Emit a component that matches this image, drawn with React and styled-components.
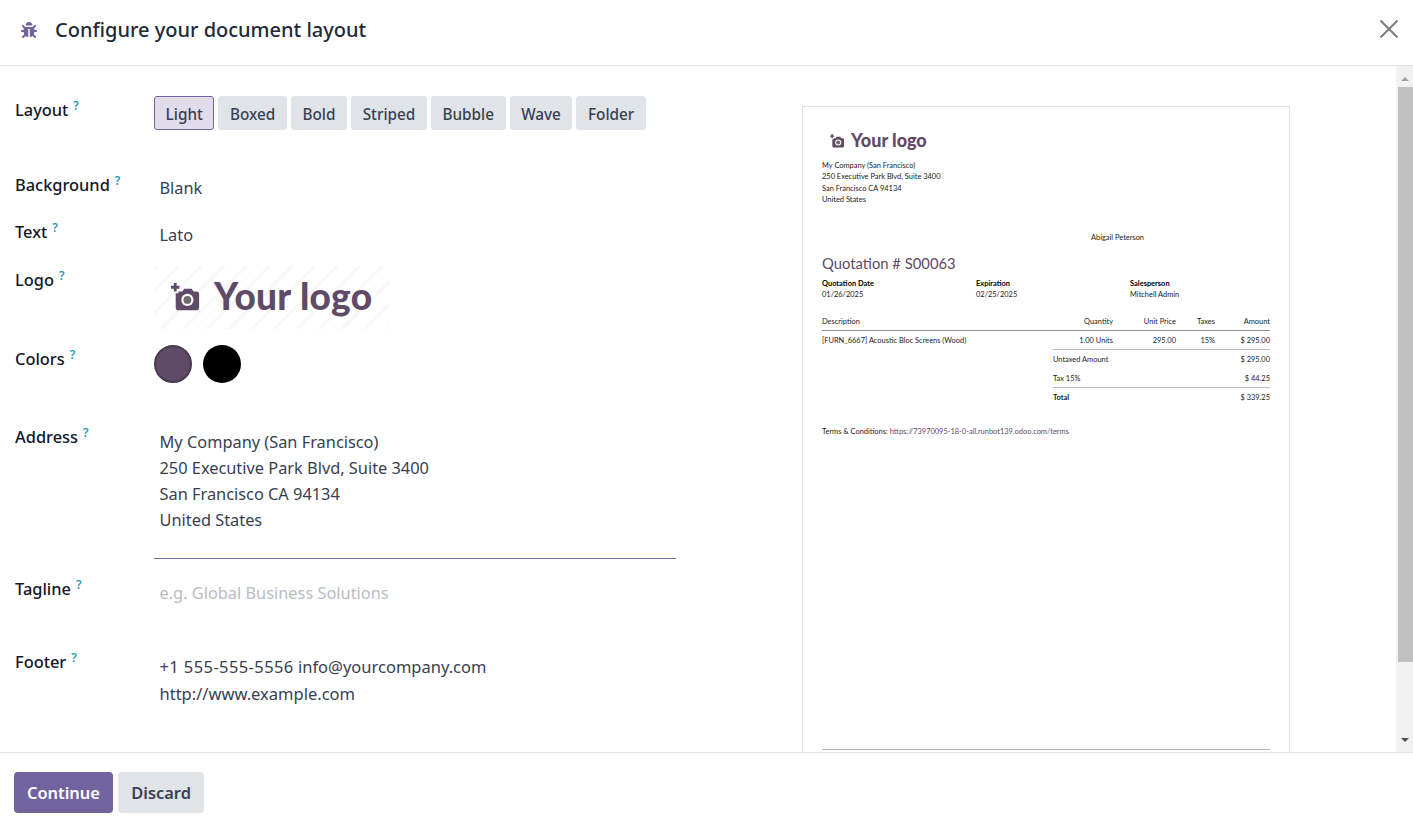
import styled, { createGlobalStyle } from "styled-components";
import { FaBug } from "react-icons/fa";

const layouts = ["Light", "Boxed", "Bold", "Striped", "Bubble", "Wave", "Folder"];
const infoCols = [
  ["Quotation Date", "01/26/2025"],
  ["Expiration", "02/25/2025"],
  ["Salesperson", "Mitchell Admin"],
];

const CameraIcon = ({ size }) => (
  <svg width={size} height={size} viewBox="0 0 32 32">
    <path d="M3 0h3v3h3v3H6v3H3V6H0V3h3z" fill="#5f4a67" />
    <path
      d="M5 11h3V9h4l2-3h8l2 3h3a3 3 0 0 1 3 3v14a3 3 0 0 1-3 3H8a3 3 0 0 1-3-3z"
      fill="#5f4a67"
    />
    <circle cx="17.5" cy="18" r="6.5" fill="#fff" />
    <circle cx="17.5" cy="18" r="4.2" fill="#6b6b6b" />
  </svg>
);

const Help = () => <HelpMark>?</HelpMark>;

export default function App() {
  return (
    <>
      <GlobalStyle />
      <Dialog>
        <Header>
          <BugWrap>
            <FaBug size={16} />
          </BugWrap>
          <Title>Configure your document layout</Title>
          <CloseButton aria-label="Close">
            <svg width="18" height="18" viewBox="0 0 18 18">
              <path d="M.5.5l17 17M17.5.5l-17 17" stroke="#7b7b7b" strokeWidth="2" />
            </svg>
          </CloseButton>
        </Header>

        <Body>
          <Form>
            <Row $height={105} $top={30}>
              <Label>Layout<Help /></Label>
              <ButtonGroup>
                {layouts.map((name, i) => (
                  <LayoutButton key={name} $active={i === 0}>{name}</LayoutButton>
                ))}
              </ButtonGroup>
            </Row>
            <Row $height={47}>
              <Label>Background<Help /></Label>
              <Value>Blank</Value>
            </Row>
            <Row $height={48}>
              <Label>Text<Help /></Label>
              <Value>Lato</Value>
            </Row>
            <Row $height={79}>
              <Label>Logo<Help /></Label>
              <LogoBox>
                <CameraIcon size={30} />
                <LogoText>Your logo</LogoText>
              </LogoBox>
            </Row>
            <Row $height={78}>
              <Label>Colors<Help /></Label>
              <Swatches>
                <Swatch $color="#5f4a67" $ring />
                <Swatch $color="#000" />
              </Swatches>
            </Row>
            <Row $height={152}>
              <Label>Address<Help /></Label>
              <AddressField>
                My Company (San Francisco)<br />
                250 Executive Park Blvd, Suite 3400<br />
                San Francisco CA 94134<br />
                United States
              </AddressField>
            </Row>
            <Row $height={73}>
              <Label>Tagline<Help /></Label>
              <Placeholder>e.g. Global Business Solutions</Placeholder>
            </Row>
            <Row $height={90}>
              <Label>Footer<Help /></Label>
              <FooterValue>
                <Phone>+1 555-555-5556</Phone> info@yourcompany.com<br />
                http://www.example.com
              </FooterValue>
            </Row>
          </Form>

          <PreviewPane>
            <Paper>
              <PaperLogo>
                <CameraIcon size={15} />
                <PaperLogoText>Your logo</PaperLogoText>
              </PaperLogo>
              <PaperAddress>
                My Company (San Francisco)<br />
                250 Executive Park Blvd, Suite 3400<br />
                San Francisco CA 94134<br />
                United States
              </PaperAddress>
              <Customer>Abigail Peterson</Customer>
              <QuoteTitle>Quotation # S00063</QuoteTitle>
              <InfoGrid>
                {infoCols.map(([head, val]) => (
                  <div key={head}>
                    <InfoHead>{head}</InfoHead>
                    <div>{val}</div>
                  </div>
                ))}
              </InfoGrid>
              <LinesHead>
                <span>Description</span>
                <Num>Quantity</Num>
                <Num>Unit Price</Num>
                <Num>Taxes</Num>
                <Num>Amount</Num>
              </LinesHead>
              <LinesRow>
                <span>[FURN_6667] Acoustic Bloc Screens (Wood)</span>
                <Num>1.00 Units</Num>
                <Num>295.00</Num>
                <Num>15%</Num>
                <Num>$ 295.00</Num>
              </LinesRow>
              <Totals>
                <TotalRow $line>
                  <span>Untaxed Amount</span>
                  <span>$ 295.00</span>
                </TotalRow>
                <TotalRow>
                  <span>Tax 15%</span>
                  <span>$ 44.25</span>
                </TotalRow>
                <TotalRow $line>
                  <strong>Total</strong>
                  <span>$ 339.25</span>
                </TotalRow>
              </Totals>
              <Terms>
                Terms &amp; Conditions: <TermsLink>https://73970095-18-0-all.runbot139.odoo.com/terms</TermsLink>
              </Terms>
              <PaperFooterRule />
            </Paper>
          </PreviewPane>

          <Scrollbar>
            <Arrow $up />
            <ScrollTrack>
              <ScrollThumb />
            </ScrollTrack>
            <Arrow />
          </Scrollbar>
        </Body>

        <Footer>
          <PrimaryButton>Continue</PrimaryButton>
          <SecondaryButton>Discard</SecondaryButton>
        </Footer>
      </Dialog>
    </>
  );
}

const GlobalStyle = createGlobalStyle`
  html, body {
    margin: 0;
    padding: 0;
    background: #fff;
    overflow: hidden;
  }
  body {
    font-family: "Noto Sans", "Open Sans", sans-serif;
    color: #374151;
  }
`;

const Dialog = styled.div`
  width: 1413px;
  height: 822px;
  display: flex;
  flex-direction: column;
  overflow: hidden;
`;

const Header = styled.header`
  height: 65px;
  flex: none;
  display: flex;
  align-items: center;
  padding: 0 15px 0 21px;
  border-bottom: 1px solid #e2e2e6;
`;

const BugWrap = styled.span`
  display: flex;
  color: #71639e;
  margin: -5px 18px 0 0;
`;

const Title = styled.h1`
  margin: -6px 0 0;
  flex: 1;
  font-size: 20px;
  font-weight: 500;
  color: #1f2937;
`;

const CloseButton = styled.button`
  border: 0;
  padding: 0;
  margin-top: -7px;
  background: none;
  display: flex;
`;

const Body = styled.main`
  flex: 1;
  min-height: 0;
  display: flex;
  overflow: hidden;
`;

const Form = styled.section`
  width: 787px;
  flex: none;
  padding-left: 15px;
`;

const Row = styled.div`
  height: ${(p) => p.$height}px;
  box-sizing: border-box;
  padding-top: ${(p) => p.$top || 0}px;
  display: flex;
  align-items: flex-start;
`;

const Label = styled.div`
  width: 139px;
  flex: none;
  padding-top: 2px;
  font-size: 16.4px;
  line-height: 24px;
  font-weight: 500;
  color: #111827;
`;

const HelpMark = styled.sup`
  margin-left: 5px;
  font-size: 12px;
  font-weight: 600;
  color: #1f9bbd;
  line-height: 0;
`;

const ButtonGroup = styled.div`
  display: flex;
  gap: 4px;
`;

const LayoutButton = styled.button`
  height: 34px;
  padding: 1px 10.6px 0;
  border: 1px solid ${(p) => (p.$active ? "#71639e" : "#e0e3e8")};
  border-radius: 3px;
  background: ${(p) => (p.$active ? "#e0dce9" : "#e0e3e8")};
  color: #374151;
  font-family: inherit;
  font-size: 15.3px;
  font-weight: 500;
`;

const Value = styled.div`
  padding: 4px 0 0 5.5px;
  font-size: 16.35px;
  line-height: 26px;
  color: #374151;
`;

const LogoBox = styled.div`
  width: 235px;
  height: 63px;
  display: flex;
  align-items: center;
  padding-left: 17px;
  box-sizing: border-box;
  gap: 13px;
  background: repeating-linear-gradient(
    135deg,
    #f8f8f8 0 3px,
    #fff 3px 16px
  );
`;

const LogoText = styled.span`
  margin-top: -4px;
  font-family: "Lato", sans-serif;
  font-size: 37px;
  font-weight: 900;
  letter-spacing: 0.3px;
  color: #5f4a67;
`;

const Swatches = styled.div`
  display: flex;
  gap: 11px;
`;

const Swatch = styled.div`
  width: 38px;
  height: 38px;
  box-sizing: border-box;
  border-radius: 50%;
  background: ${(p) => p.$color};
  border: ${(p) => (p.$ring ? "2px solid #4a3a52" : "0")};
`;

const AddressField = styled(Value)`
  width: 516px;
  height: 129px;
  padding-top: 0;
  margin-top: 6px;
  border-bottom: 1px solid #71639e;
`;

const Placeholder = styled(Value)`
  padding-top: 5px;
  color: #b9bcc2;
`;

const FooterValue = styled(Value)`
  font-size: 16.5px;
  line-height: 27px;
  padding-top: 0;
  margin-top: 5px;
`;

const Phone = styled.span`
  letter-spacing: 0.4px;
`;

const PreviewPane = styled.section`
  flex: 1;
  min-width: 0;
  padding-top: 40px;
`;

const Paper = styled.div`
  width: 488px;
  height: 700px;
  box-sizing: border-box;
  padding: 20px 19px 0;
  border: 1px solid #e2e2e6;
  font-family: "Lato", sans-serif;
  font-size: 7.45px;
  line-height: 11.4px;
  color: #222;
`;

const PaperLogo = styled.div`
  display: flex;
  align-items: center;
  gap: 6px;
  height: 28px;
  padding-left: 8px;
`;

const PaperLogoText = styled.span`
  font-size: 18px;
  font-weight: 900;
  color: #5f4a67;
`;

const PaperAddress = styled.div`
  margin-top: 5px;
`;

const Customer = styled.div`
  margin: 26.5px 0 0 269px;
`;

const QuoteTitle = styled.div`
  margin-top: 9.5px;
  font-size: 14.8px;
  line-height: 20px;
  color: #5f4a67;
`;

const InfoGrid = styled.div`
  display: grid;
  grid-template-columns: repeat(3, 154px);
  margin-top: 5px;
`;

const InfoHead = styled.div`
  font-weight: 700;
  color: #000;
`;

const linesColumns = "231px 60px 63px 39px 55px";

const LinesHead = styled.div`
  display: grid;
  grid-template-columns: ${linesColumns};
  margin-top: 15px;
  padding-bottom: 3px;
  border-bottom: 1px solid #909090;
`;

const LinesRow = styled.div`
  display: grid;
  grid-template-columns: ${linesColumns};
  padding: 4px 0 2px;
`;

const Num = styled.span`
  text-align: right;
`;

const Totals = styled.div`
  margin-left: 231px;
`;

const TotalRow = styled.div`
  display: flex;
  justify-content: space-between;
  height: 19px;
  box-sizing: border-box;
  padding-top: 4px;
  border-top: 1px solid ${(p) => (p.$line ? "#bbb" : "transparent")};
`;

const Terms = styled.div`
  margin-top: 20px;
`;

const TermsLink = styled.span`
  color: #5f4a67;
`;

const PaperFooterRule = styled.div`
  margin-top: 312px;
  border-top: 1px solid #b5b5b5;
`;

const Scrollbar = styled.div`
  width: 17px;
  flex: none;
  display: flex;
  flex-direction: column;
  background: #f1f1f1;
`;

const Arrow = styled.div`
  height: 21px;
  flex: none;
  box-sizing: border-box;
  padding: ${(p) => (p.$up ? "4px 0 0" : "0 0 4px")};
  display: flex;
  align-items: center;
  justify-content: center;
  &::before {
    content: "";
    border-left: 4px solid transparent;
    border-right: 4px solid transparent;
    ${(p) => (p.$up ? "border-bottom: 4px solid #a3a3a3;" : "border-top: 4px solid #505050;")}
  }
`;

const ScrollTrack = styled.div`
  flex: 1;
  min-height: 0;
`;

const ScrollThumb = styled.div`
  height: 575px;
  margin-left: 2px;
  background: #c1c1c1;
`;

const Footer = styled.footer`
  height: 70px;
  flex: none;
  box-sizing: border-box;
  display: flex;
  align-items: flex-start;
  gap: 5px;
  padding: 19px 14px 0;
  border-top: 1px solid #e2e2e6;
`;

const PrimaryButton = styled.button`
  height: 41px;
  padding: 0 13px;
  border: 0;
  border-radius: 4px;
  background: #71639e;
  color: #fff;
  font-family: inherit;
  font-size: 16.4px;
  font-weight: 600;
`;

const SecondaryButton = styled(PrimaryButton)`
  padding: 0 13.5px;
  background: #e0e3e8;
  color: #374151;
`;
